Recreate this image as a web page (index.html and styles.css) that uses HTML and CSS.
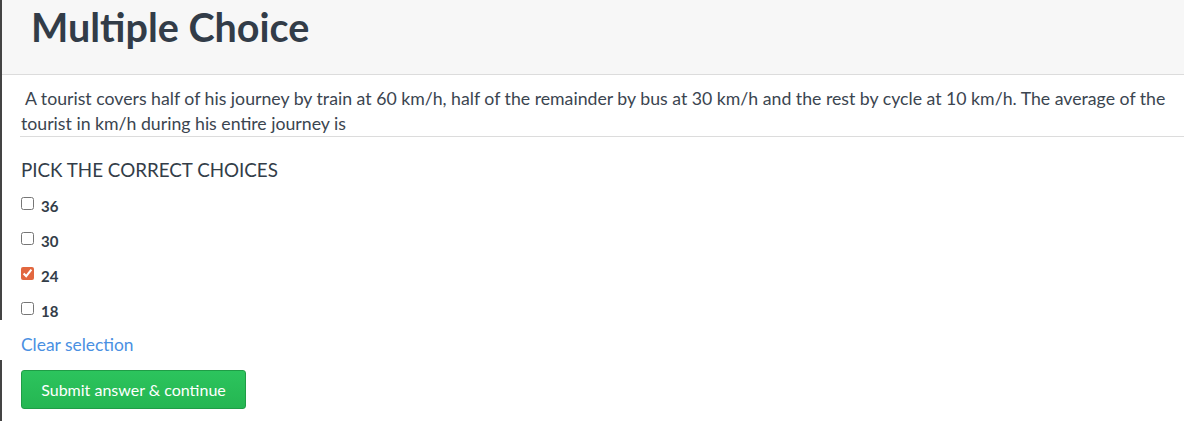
FILE: index.html
```html
<!DOCTYPE html>
<html>
<head>
<meta charset="utf-8">
<link rel="stylesheet" href="styles.css">
</head>
<body>
<div class="page">
  <header class="head">
    <h1 class="title">Multiple Choice</h1>
  </header>
  <div class="question">&nbsp;A tourist covers half of his journey by train at 60 km/h, half of the remainder by bus at 30 km/h and the rest by cycle at 10 km/h. The average of the tourist in km/h during his entire journey is</div>
  <div class="choices">
    <h2 class="pick">PICK THE CORRECT CHOICES</h2>
    <label class="choice"><input type="checkbox" class="box"><span>36</span></label>
    <label class="choice"><input type="checkbox" class="box"><span>30</span></label>
    <label class="choice"><input type="checkbox" class="box" checked><span>24</span></label>
    <label class="choice"><input type="checkbox" class="box"><span>18</span></label>
  </div>
</div>
<div class="clear-row"><a class="clear" href="#">Clear selection</a></div>
<div class="submit-row"><button class="submit">Submit answer &amp; continue</button></div>
</body>
</html>
```
FILE: styles.css
```css
html, body {
  margin: 0;
  padding: 0;
  background: #fff;
  font-family: Lato, "Open Sans", sans-serif;
  color: #333d48;
}
.page {
  border-left: 2px solid #444;
  height: 320px;
  overflow: hidden;
}
.head {
  background: #f7f7f7;
  height: 75px;
  border-bottom: 1px solid #dcdcdc;
  box-sizing: border-box;
  padding-left: 29px;
}
.title {
  margin: 0;
  font-size: 39.5px;
  font-weight: 700;
  line-height: 54px;
  color: #323c48;
}
.question {
  margin-left: 18px;
  padding: 11px 12px 0 1px;
  font-size: 17.7px;
  line-height: 25px;
  border-bottom: 1px solid #dcdcdc;
  color: #3b4550;
}
.choices {
  padding-left: 19px;
}
.pick {
  margin: 22px 0 5px;
  font-size: 18.8px;
  font-weight: 400;
  line-height: 22px;
  color: #333d48;
}
.choice {
  display: flex;
  align-items: center;
  height: 35px;
  font-size: 15px;
  font-weight: 700;
}
.choice span {
  position: relative;
  top: 2px;
}
.box {
  margin: 0 7px 0 0;
  width: 13px;
  height: 13px;
  accent-color: #e2673f;
}
.clear-row {
  height: 40px;
  padding: 8px 0 0 21px;
  box-sizing: border-box;
  display: flex;
  align-items: center;
}
.clear {
  color: #4a90e2;
  text-decoration: none;
  font-size: 17.4px;
}
.submit-row {
  border-left: 2px solid #444;
  height: 61px;
  padding: 10px 0 0 19px;
  box-sizing: border-box;
}
.submit {
  width: 225px;
  height: 39px;
  background: linear-gradient(#2cc45d, #25b652);
  border: 1px solid #1f9d46;
  border-radius: 3px;
  color: #fff;
  font-family: Lato, sans-serif;
  font-size: 16px;
  padding: 0;
}
```
